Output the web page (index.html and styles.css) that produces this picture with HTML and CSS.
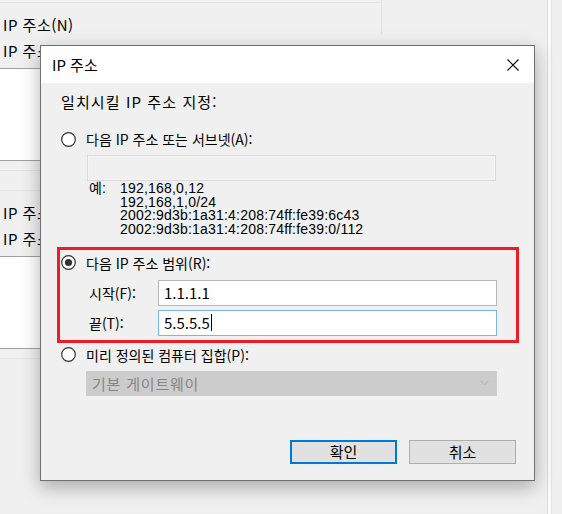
FILE: index.html
```html
<!DOCTYPE html>
<html lang="ko">
<head>
<meta charset="utf-8">
<title>IP 주소</title>
<link rel="stylesheet" href="styles.css">
</head>
<body>
<div class="back">
  <div class="edge"></div>
  <section class="grp">
    <div class="grp-text first">IP 주소(N)</div>
    <div class="grp-text second">IP 주소</div>
    <div class="list"></div>
  </section>
  <section class="grp grp2">
    <div class="grp-text first">IP 주소(N)</div>
    <div class="grp-text second">IP 주소</div>
    <div class="list"></div>
  </section>
</div>
<div class="vstrip"></div>

<div class="dialog">
  <div class="titlebar">
    <span class="title">IP 주소</span>
    <span class="close">
      <svg width="12" height="12" viewBox="0 0 12 12"><path d="M0.5 0.5 L11.5 11.5 M11.5 0.5 L0.5 11.5" stroke="#000" stroke-width="1.1" fill="none"/></svg>
    </span>
  </div>
  <div class="body">
    <div class="heading">일치시킬 IP 주소 지정:</div>

    <div class="opt opt1">
      <svg class="radio" width="15" height="15" viewBox="0 0 15 15"><circle cx="7.5" cy="7.5" r="6.8" fill="#fff" stroke="#333" stroke-width="1.2"/></svg>
      <span class="lbl">다음 IP 주소 또는 서브넷(A):</span>
    </div>
    <div class="field subnet"></div>
    <div class="examples">
      <span>예:</span><span>192,168,0,12</span>
      <span></span><span>192,168,1,0/24</span>
      <span></span><span>2002:9d3b:1a31:4:208:74ff:fe39:6c43</span>
      <span></span><span>2002:9d3b:1a31:4:208:74ff:fe39:0/112</span>
    </div>

    <div class="opt opt2">
      <svg class="radio" width="15" height="15" viewBox="0 0 15 15"><circle cx="7.5" cy="7.5" r="6.8" fill="#fff" stroke="#333" stroke-width="1.2"/><circle cx="7.5" cy="7.5" r="3.6" fill="#333"/></svg>
      <span class="lbl">다음 IP 주소 범위(R):</span>
    </div>
    <div class="row row1">
      <span class="rlbl">시작(F):</span>
      <div class="field edit">1.1.1.1</div>
    </div>
    <div class="row row2">
      <span class="rlbl">끝(T):</span>
      <div class="field edit focus">5.5.5.5<span class="caret"></span></div>
    </div>

    <div class="opt opt3">
      <svg class="radio" width="15" height="15" viewBox="0 0 15 15"><circle cx="7.5" cy="7.5" r="6.8" fill="#fff" stroke="#333" stroke-width="1.2"/></svg>
      <span class="lbl">미리 정의된 컴퓨터 집합(P):</span>
    </div>
    <div class="combo">
      <span>기본 게이트웨이</span>
      <svg width="9" height="6" viewBox="0 0 9 6"><path d="M0.5 0.8 L4.5 4.8 L8.5 0.8" stroke="#b0b0b0" stroke-width="1" fill="none"/></svg>
    </div>

    <div class="buttons">
      <button class="btn default">확인</button>
      <button class="btn">취소</button>
    </div>
  </div>
  <div class="highlight"></div>
</div>
</body>
</html>
```

FILE: styles.css
```css
* { box-sizing: border-box; }
html, body { margin: 0; padding: 0; }
body {
  width: 562px;
  height: 514px;
  overflow: hidden;
  position: relative;
  background: #f0f0f0;
  font-family: "Noto Sans CJK KR", sans-serif;
  font-size: 15px;
  color: #000;
}

/* background window */
.back { width: 382px; padding-top: 2px; position: relative; }
.edge { position: absolute; left: 381px; top: 0; width: 1px; height: 34px; background: #e2e2e2; }
.grp { border-top: 1px solid #e3e3e3; border-bottom: 1px solid #e3e3e3; padding-bottom: 9px; }
.grp2 { margin-top: 19px; }
.grp-text { padding-left: 3px; line-height: 20px; height: 20px; white-space: nowrap; letter-spacing: 0.5px; }
.grp-text.first { margin-top: 12px; }
.grp-text.second { margin-top: 6px; }
.list {
  margin-top: 7px;
  height: 93px;
  background: #fff;
  border-top: 1px solid #a0a0a0;
  border-bottom: 1px solid #a0a0a0;
}
.vstrip {
  position: absolute; left: 547px; top: 0; width: 5px; height: 514px;
  background: #fafafa; border-left: 1px solid #dcdcdc; border-right: 1px solid #e4e4e4;
}

/* dialog */
.dialog {
  position: absolute;
  left: 40px; top: 45px;
  width: 495px; height: 436px;
  border: 1px solid #707070;
  background: #f0f0f0;
  box-shadow: 0 6px 18px rgba(0,0,0,0.3);
}
.titlebar {
  height: 37px;
  background: #fff;
  display: flex;
  align-items: center;
  justify-content: space-between;
  padding-left: 11px;
}
.title { font-size: 15px; line-height: 20px; }
.close { width: 42px; height: 37px; display: flex; align-items: center; justify-content: center; }

.body { padding: 9px 0 0 20px; }
.heading { line-height: 20px; height: 20px; letter-spacing: 1.1px; }

.opt { display: flex; align-items: center; height: 20px; gap: 10px; font-size: 14px; }
.opt1 { margin-top: 17px; }
.opt2 { margin-top: 16px; }
.opt3 { margin-top: 9px; }
.radio { flex: none; }

.field { height: 26px; background: #fff; border: 1px solid #b7b7b7; }
.subnet { margin: 6px 0 0 26px; width: 409px; background: #f0f0f0; border-color: #dadada; box-shadow: inset 0 0 0 1px #f6f6f6; }

.examples {
  margin: 1px 0 0 28px;
  display: grid;
  grid-template-columns: 31px auto;
  font-family: "Liberation Sans", "Noto Sans CJK KR", sans-serif;
  font-size: 14px;
  line-height: 13.7px;
  letter-spacing: 0.2px;
}

.row { display: flex; align-items: center; padding-left: 28px; }
.row1 { margin-top: 7px; }
.row2 { margin-top: 4px; }
.rlbl { width: 69px; font-size: 14px; }
.edit { width: 339px; padding-left: 5px; display: flex; align-items: center; font-size: 15px; }
.edit.focus { border-color: #7ab6ea; }
.caret { display: inline-block; width: 1px; height: 17px; background: #000; margin-left: 1px; }

.combo {
  margin: 6px 0 0 25px;
  width: 411px; height: 25px;
  background: #cccccc;
  border: 1px solid #cdcdcd;
  display: flex; align-items: center; justify-content: space-between;
  padding: 0 7px 0 5px;
  color: #868686;
  font-size: 15px;
  letter-spacing: 0.8px;
}

.buttons { display: flex; justify-content: flex-end; gap: 12px; padding-right: 18px; margin-top: 44px; }
.btn {
  width: 107px; height: 24px;
  background: #e1e1e1;
  border: 1px solid #adadad;
  font-family: inherit;
  font-size: 15px;
  padding: 0;
  color: #000;
  line-height: 20px;
}
.btn.default { border: 2px solid #0078d7; }

.highlight {
  position: absolute;
  left: 16px; top: 201px;
  width: 462px; height: 96px;
  border: 3px solid #ed1c24;
}
```
